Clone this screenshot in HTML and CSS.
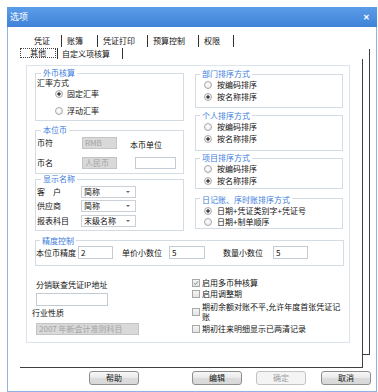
FILE: index.html
```html
<!DOCTYPE html>
<html>
<head>
<meta charset="utf-8">
<title>选项</title>
<link rel="stylesheet" href="styles.css">
</head>
<body>
<div class="win">
  <div class="titlebar"><span class="title">选项</span><span class="close">✕</span></div>
  <div class="client">
    <div class="tabrow r1">
      <span class="tab t1">凭证</span><span class="tab t2">账簿</span><span class="tab t3">凭证打印</span><span class="tab t4">预算控制</span><span class="tab t5">权限</span><span class="tab tend"></span>
    </div>
    <div class="tabrow r2">
      <span class="cur">其他</span><span class="tab t6">自定义项核算</span><span class="tab tend"></span>
    </div>
    <div class="back">
      <div class="front">
        <div class="page">
          <div class="top">
            <div class="colL">
              <div class="grp g1">
                <div class="lg">外币核算</div>
                <div class="lbl">汇率方式</div>
                <div class="rl ra"><span class="radio on"></span>固定汇率</div>
                <div class="rl rb"><span class="radio"></span>浮动汇率</div>
              </div>
              <div class="grp g2">
                <div class="lg">本位币</div>
                <div class="row2 rowa">
                  <span class="l45">币符</span><span class="inp dis w35">RMB</span><span class="unit">本币单位</span>
                </div>
                <div class="row2 rowb">
                  <span class="l45">币名</span><span class="inp dis w35">人民币</span><span class="inp w41"></span>
                </div>
              </div>
              <div class="grp g3">
                <div class="lg">显示名称</div>
                <div class="srow s1"><span class="l44">客　户</span><span class="sel">简称<i class="arr"></i></span></div>
                <div class="srow s2"><span class="l44">供应商</span><span class="sel">简称<i class="arr"></i></span></div>
                <div class="srow s3"><span class="l44">报表科目</span><span class="sel">末级名称<i class="arr"></i></span></div>
              </div>
            </div>
            <div class="colR">
              <div class="grp h1">
                <div class="lg">部门排序方式</div>
                <div class="rr"><span class="radio"></span>按编码排序</div>
                <div class="rr"><span class="radio on"></span>按名称排序</div>
              </div>
              <div class="grp h2">
                <div class="lg">个人排序方式</div>
                <div class="rr"><span class="radio"></span>按编码排序</div>
                <div class="rr"><span class="radio on"></span>按名称排序</div>
              </div>
              <div class="grp h3">
                <div class="lg">项目排序方式</div>
                <div class="rr"><span class="radio"></span>按编码排序</div>
                <div class="rr"><span class="radio on"></span>按名称排序</div>
              </div>
              <div class="grp h4">
                <div class="lg">日记账、序时账排序方式</div>
                <div class="rr r11"><span class="radio on"></span>日期+凭证类别字+凭证号</div>
                <div class="rr r11"><span class="radio"></span>日期+制单顺序</div>
              </div>
            </div>
          </div>
          <div class="grp prec">
            <div class="lg">精度控制</div>
            <div class="prow">
              <span class="pl1">本位币精度</span><span class="inp pi1">2</span>
              <span class="pl2">单价小数位</span><span class="inp pi2">5</span>
              <span class="pl3">数量小数位</span><span class="inp pi3">5</span>
            </div>
          </div>
          <div class="bottom">
            <div class="bl">
              <div class="ipl">分销联查凭证IP地址</div>
              <div class="inp ipi"></div>
              <div class="indl">行业性质</div>
              <div class="inp dis indi">2007 年新会计准则科目</div>
            </div>
            <div class="br">
              <div class="cb c1"><span class="box on"><svg viewBox="0 0 8 8" width="8" height="8"><path d="M1.5 4.2 L3.3 6 L6.6 1.8" fill="none" stroke="#6b6b6b" stroke-width="1"/></svg></span><span>启用多币种核算</span></div>
              <div class="cb c2"><span class="box"></span><span>启用调整期</span></div>
              <div class="cb c3"><span class="box"></span><span>期初余额对账不平,允许年度首张凭证记<br>账</span></div>
              <div class="cb c4"><span class="box"></span><span>期初往来明细显示已两清记录</span></div>
            </div>
          </div>
        </div>
      </div>
    </div>
    <div class="btns">
      <span class="btn b1">帮助</span>
      <span class="btn b2">编辑</span>
      <span class="btn b3 off">确定</span>
      <span class="btn b4">取消</span>
    </div>
  </div>
</div>
</body>
</html>
```

FILE: styles.css
```css
* { box-sizing: border-box; }
html, body { margin: 0; padding: 0; background: #fff; }
body {
  font-family: "Noto Sans CJK SC", "Noto Sans", sans-serif;
  font-size: 8px;
  line-height: 10px;
  color: #111;
  width: 378px;
  height: 392px;
  overflow: hidden;
}
.win {
  margin: 7px 0 0 7px;
  width: 370px;
  height: 385px;
  display: flex;
  flex-direction: column;
}
.titlebar {
  height: 20px;
  flex: none;
  background: linear-gradient(#5c9de9, #3f82d8);
  color: #fff;
  display: flex;
  align-items: center;
  justify-content: space-between;
  padding: 0 7px 0 3px;
  font-size: 9px;
}
.close { font-size: 8px; font-weight: bold; }
.client {
  flex: 1;
  border: 1px solid #8fb4e4;
  border-top: 0;
  display: flex;
  flex-direction: column;
}
.tabrow { display: flex; height: 12px; line-height: 12px; flex: none; }
.r1 { margin-top: 8px; padding-left: 20px; }
.r2 { margin-top: 1px; padding-left: 12px; }
.tab { border-left: 1px solid #333; padding-left: 5px; white-space: nowrap; }
.t1 { width: 33px; border-left-color: transparent; }
.t2 { width: 36px; }
.t3 { width: 50px; }
.t4 { width: 51px; }
.t5 { width: 35px; }
.tend { width: 1px; padding: 0; }
.cur {
  width: 36px;
  height: 10px;
  line-height: 8px;
  border: 1px dotted #444;
  text-align: center;
  align-self: flex-start;
}
.t6 { width: 65px; margin-left: 1px; padding-left: 4px; }

.back {
  margin: -11px 0 0 12px;
  width: 350px;
  padding-top: 10px;
  border-right: 1px solid #404040;
  border-bottom: 1px solid #404040;
  flex: none;
}
.front {
  margin: 0 6px -14px 0;
  background: #fff;
  border-right: 1px solid #404040;
  border-bottom: 1px solid #404040;
  padding: 6px 12px 24px 6px;
}
.page {
  border: 1px solid #dde4eb;
  height: 278px;
  padding-left: 8px;
}
.top { display: flex; align-items: flex-start; }
.colL { width: 149px; display: flex; flex-direction: column; }
.colR { width: 148px; margin-left: 11px; display: flex; flex-direction: column; }

.grp {
  border: 1px solid #d3dbe3;
  flex: none;
}
.lg {
  width: max-content;
  margin: -6px 0 0 4px;
  padding: 0 2px;
  height: 10px;
  line-height: 10px;
  background: #fff;
  color: #3b7ddd;
}
.g1 { margin-top: 7px; height: 48px; padding-left: 1px; }
.g2 { margin-top: 9px; height: 44px; padding-left: 1px; }
.g3 { margin-top: 5px; height: 52px; padding-left: 1px; }
.lbl { height: 10px; }
.rl { display: flex; align-items: center; height: 10px; }
.ra { margin-top: 1px; }
.rb { margin-top: 7px; }
.rl .radio { margin: 0 4px 0 18px; }

.radio {
  width: 8px;
  height: 8px;
  border-radius: 50%;
  border: 1px solid #a9a9a9;
  background: radial-gradient(circle at 45% 40%, #ffffff 0, #f2f2f2 50%, #dcdcdc 100%);
  flex: none;
}
.radio.on {
  background: radial-gradient(circle, #3d3d3d 0, #3d3d3d 1.3px, #f4f4f4 2px, #e0e0e0 100%);
}

.row2 { display: flex; align-items: center; height: 12px; }
.rowa { margin-top: 2px; }
.rowb { margin-top: 8px; }
.l45 { width: 45px; flex: none; }
.inp {
  height: 12px;
  border: 1px solid #c3ccd5;
  background: #fff;
  line-height: 10px;
  padding-left: 2px;
  flex: none;
  white-space: nowrap;
  overflow: hidden;
}
.inp.dis { background: #d9d9d9; border-color: #c4c4c4; color: #a3a3a3; }
.w35 { width: 35px; }
.w41 { width: 41px; margin-left: 18px; margin-top: -1px; }
.unit { margin-left: 13px; margin-top: 3px; }

.srow { display: flex; align-items: center; height: 12px; }
.s1 { margin-top: 2px; }
.s2 { margin-top: 2px; }
.s3 { margin-top: 3px; }
.l44 { width: 44px; flex: none; }
.sel {
  width: 55px;
  height: 12px;
  border: 1px solid #c9d0d7;
  background: #fff;
  display: flex;
  align-items: center;
  justify-content: space-between;
  padding-left: 2px;
}
.arr {
  width: 0;
  height: 0;
  border-left: 2px solid transparent;
  border-right: 2px solid transparent;
  border-top: 2px solid #666;
  margin-right: 5px;
}

.h1 { margin-top: 8px; height: 34px; }
.h2 { margin-top: 7px; height: 36px; padding-top: 1px; }
.h3 { margin-top: 7px; height: 31px; }
.h4 { margin-top: 9px; height: 31px; padding-top: 2px; }
.h1 .rr:first-of-type { margin-top: 1px; }
.rr { display: flex; align-items: center; height: 12px; }
.rr.r11 { height: 11px; }
.rr .radio { margin: 0 5px 0 8px; }

.prec { margin-top: 9px; width: 309px; height: 26px; padding-top: 1px; }
.prow { display: flex; align-items: center; height: 13px; }
.prow .inp { height: 13px; line-height: 11px; }
.pl1 { width: 42px; flex: none; }
.pi1 { width: 35px; }
.pl2 { width: 47px; flex: none; margin-left: 9px; }
.pi2 { width: 36px; }
.pl3 { width: 50px; flex: none; margin-left: 18px; }
.pi3 { width: 35px; }

.bottom { display: flex; }
.bl { width: 157px; margin-top: 14px; }
.ipl { height: 10px; padding-left: 1px; }
.ipi { width: 72px; height: 13px; margin: 3px 0 0 1px; }
.indl { height: 10px; margin-top: 2px; margin-left: -3px; }
.indi { width: 103px; height: 12px; margin: 5px 0 0 1px; }
.br { margin-top: 12px; }
.cb { display: flex; align-items: center; }
.cb .box {
  width: 8px;
  height: 8px;
  border: 1px solid #a8a8a8;
  background: linear-gradient(#f4f4f4, #e4e4e4);
  margin-right: 2px;
  flex: none;
  display: flex;
  align-items: center;
  justify-content: center;
}
.cb .box svg { display: block; }
.c2 { margin-top: 1px; }
.c3 { margin-top: 3px; }
.c4 { margin-top: 2px; }

.btns { display: flex; margin-top: 16px; padding-left: 81px; }
.btn {
  width: 50px;
  height: 14px;
  border: 1px solid #8e8e8e;
  border-radius: 3px;
  background: linear-gradient(#f8f8f8, #e9e9e9 50%, #dcdcdc 51%, #d8d8d8);
  text-align: center;
  line-height: 12px;
  flex: none;
}
.b2 { margin-left: 53px; }
.b3 { margin-left: 14px; }
.b4 { margin-left: 15px; }
.btn.off { color: #9c9c9c; border-color: #c3c3c3; background: #f4f4f4; }
```
